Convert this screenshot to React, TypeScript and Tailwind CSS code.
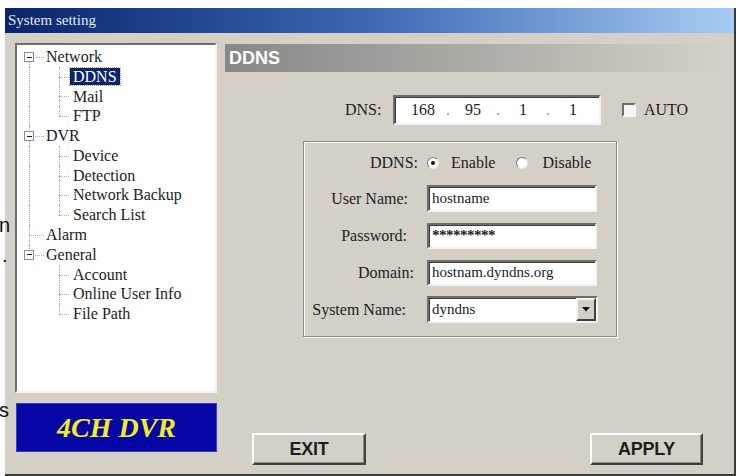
import React from "react";

const serif = "font-['Liberation_Serif','Times_New_Roman',serif]";
const sans = "font-['Liberation_Sans',Arial,sans-serif]";

type Row = {
  label: string;
  kind: "box" | "leaf" | "child";
  v1: "none" | "full" | "top" | "bottom";
  v2?: "full" | "top";
  selected?: boolean;
};

const rows: Row[] = [
  { label: "Network", kind: "box", v1: "bottom" },
  { label: "DDNS", kind: "child", v1: "full", v2: "full", selected: true },
  { label: "Mail", kind: "child", v1: "full", v2: "full" },
  { label: "FTP", kind: "child", v1: "full", v2: "top" },
  { label: "DVR", kind: "box", v1: "full" },
  { label: "Device", kind: "child", v1: "full", v2: "full" },
  { label: "Detection", kind: "child", v1: "full", v2: "full" },
  { label: "Network Backup", kind: "child", v1: "full", v2: "full" },
  { label: "Search List", kind: "child", v1: "full", v2: "top" },
  { label: "Alarm", kind: "leaf", v1: "full" },
  { label: "General", kind: "box", v1: "top" },
  { label: "Account", kind: "child", v1: "none", v2: "full" },
  { label: "Online User Info", kind: "child", v1: "none", v2: "full" },
  { label: "File Path", kind: "child", v1: "none", v2: "top" },
];

function TreeRow({ r }: { r: Row }) {
  return (
    <div className="relative h-[19.8px] flex items-center">
      {r.v1 === "full" && (
        <span className="absolute left-[12px] top-0 h-full border-l border-dotted border-[#a8a8a8]" />
      )}
      {r.v1 === "top" && (
        <span className="absolute left-[12px] top-0 h-1/2 border-l border-dotted border-[#a8a8a8]" />
      )}
      {r.v1 === "bottom" && (
        <span className="absolute left-[12px] top-1/2 h-1/2 border-l border-dotted border-[#a8a8a8]" />
      )}
      {r.kind === "box" && (
        <>
          <span className="absolute left-[16px] top-1/2 w-[11px] border-t border-dotted border-[#a8a8a8]" />
          <span className="absolute left-[7px] top-[5px] w-[10px] h-[10px] border border-[#8c8c8c] bg-white flex items-center justify-center">
            <span className="w-[5px] h-px bg-[#202020]" />
          </span>
        </>
      )}
      {r.kind === "leaf" && (
        <span className="absolute left-[12px] top-1/2 w-[15px] border-t border-dotted border-[#a8a8a8]" />
      )}
      {r.kind === "child" && (
        <>
          {r.v2 === "full" ? (
            <span className="absolute left-[42px] top-0 h-full border-l border-dotted border-[#a8a8a8]" />
          ) : (
            <span className="absolute left-[42px] top-0 h-1/2 border-l border-dotted border-[#a8a8a8]" />
          )}
          <span className="absolute left-[42px] top-1/2 w-[10px] border-t border-dotted border-[#a8a8a8]" />
        </>
      )}
      <div className={r.kind === "child" ? "pl-[53px]" : "pl-[29px]"}>
        {r.kind === "child" ? (
          <span
            className={
              r.selected
                ? "inline-block px-[3px] leading-[17px] bg-[#0a246a] text-white outline-1 outline-dotted outline-[#c0a060]"
                : "inline-block px-[3px] leading-[17px] text-[#1c1c1c]"
            }
          >
            {r.label}
          </span>
        ) : (
          <span className="inline-block leading-[17px] text-[#1c1c1c]">{r.label}</span>
        )}
      </div>
    </div>
  );
}

function Sunken({ className, children }: { className: string; children?: React.ReactNode }) {
  return (
    <div
      className={
        "bg-white border-2 border-t-[#6e6e6e] border-l-[#6e6e6e] border-b-[#f4f4f4] border-r-[#f4f4f4] shadow-[inset_1px_1px_0_#3c3c3c] " +
        className
      }
    >
      {children}
    </div>
  );
}

function Radio({ checked }: { checked?: boolean }) {
  return (
    <span className="w-[12px] h-[12px] rounded-full bg-white border border-t-[#7a7a7a] border-l-[#7a7a7a] border-b-[#e8e8e8] border-r-[#e8e8e8] flex items-center justify-center">
      {checked && <span className="w-[4px] h-[4px] rounded-full bg-[#111]" />}
    </span>
  );
}

function Btn({ label, className }: { label: string; className: string }) {
  return (
    <div
      className={
        "h-[32px] bg-[#d4d0c8] border-2 border-t-white border-l-white border-b-[#404040] border-r-[#404040] shadow-[inset_-1px_-1px_0_#8a8a8a] flex items-center justify-center text-[18px] font-bold text-[#1e1e1e] tracking-[-0.3px] " +
        sans +
        " " +
        className
      }
    >
      {label}
    </div>
  );
}

export default function App() {
  return (
    <div className={"relative w-[740px] h-[476px] bg-white overflow-hidden pl-[5px] pr-[4px] pt-[8px] flex " + serif}>
      <div className="flex-1 flex flex-col border-r-2 border-b-2 border-[#3a3a3a] bg-[#d4d0c8]">
        {/* title bar */}
        <div className="h-[25px] bg-linear-to-r from-[#0a246a] via-[#3c68b4] to-[#a8ccf2] flex items-center pl-[3px] text-[15px] text-[#e4e8f4]">
          System setting
        </div>
        <div className="flex-1 flex">
          {/* left column */}
          <div className="w-[212px] pl-[10px] pt-[10px] flex flex-col">
            <div className="w-[202px] h-[350px] bg-white border-2 border-t-[#6e6e6e] border-l-[#6e6e6e] border-b-[#f4f4f4] border-r-[#f4f4f4] pt-[2px] text-[16px]">
              {rows.map((r) => (
                <TreeRow key={r.label} r={r} />
              ))}
            </div>
            <div className="mt-[10px] ml-[1px] w-[201px] h-[49px] bg-[#0606a6] border border-[#3a3ad0] flex items-center justify-center">
              <span className="text-[28px] font-bold italic text-[#f2ee22] leading-none">4CH DVR</span>
            </div>
          </div>
          {/* right column */}
          <div className="flex-1 flex flex-col pl-[8px] pt-[11px] pb-[9px]">
            <div className={"w-[495px] h-[28px] bg-linear-to-r from-[#878787] to-[#d4d0c8] flex items-center pl-[4px] text-[18px] font-bold text-white " + sans}>
              DDNS
            </div>
            {/* DNS row */}
            <div className="mt-[23px] ml-[120px] h-[30px] flex items-center text-[16px] text-[#1c1c1c]">
              <span className="w-[36px] mr-[12px]">DNS:</span>
              <Sunken className="w-[208px] h-[30px] flex items-center pl-[9px]">
                <span className="w-[38px] text-center">168</span>
                <span className="w-[12px] text-center text-[#9a9a9a]">.</span>
                <span className="w-[38px] text-center">95</span>
                <span className="w-[12px] text-center text-[#9a9a9a]">.</span>
                <span className="w-[38px] text-center">1</span>
                <span className="w-[12px] text-center text-[#9a9a9a]">.</span>
                <span className="w-[38px] text-center">1</span>
              </Sunken>
              <span className="ml-[21px] w-[14px] h-[14px] bg-[#f4f4f4] border-2 border-t-[#6e6e6e] border-l-[#6e6e6e] border-b-[#f8f8f8] border-r-[#f8f8f8]" />
              <span className="ml-[8px]">AUTO</span>
            </div>
            {/* group box */}
            <div className="mt-[16px] ml-[78px] w-[314px] h-[196px] border border-[#8a8a8a] shadow-[inset_1px_1px_0_#ffffff,1px_1px_0_#ffffff] pt-[9px] flex flex-col gap-[10px] text-[16px] text-[#1c1c1c]">
              <div className="h-[24px] flex items-center">
                <span className="w-[123px] pr-[9px] text-right">DDNS:</span>
                <Radio checked />
                <span className="ml-[12px]">Enable</span>
                <span className="ml-[21px]">
                  <Radio />
                </span>
                <span className="ml-[14px]">Disable</span>
              </div>
              <div className="h-[27px] flex items-center">
                <span className="w-[123px] pr-[19px] text-right">User Name:</span>
                <Sunken className="w-[170px] h-[27px] flex items-center pl-[3px] text-[15px]">hostname</Sunken>
              </div>
              <div className="h-[27px] flex items-center">
                <span className="w-[123px] pr-[20px] text-right">Password:</span>
                <Sunken className="w-[170px] h-[26px] flex items-center pl-[3px] text-[15px] font-bold tracking-[-0.5px]">
                  *********
                </Sunken>
              </div>
              <div className="h-[27px] flex items-center">
                <span className="w-[123px] pr-[13px] text-right">Domain:</span>
                <Sunken className="w-[170px] h-[26px] flex items-center pl-[3px] text-[15px]">hostnam.dyndns.org</Sunken>
              </div>
              <div className="h-[27px] flex items-center">
                <span className="w-[123px] pr-[21px] text-right">System Name:</span>
                <Sunken className="w-[171px] h-[27px] flex items-center pl-[3px] text-[15px]">
                  <span className="flex-1">dyndns</span>
                  <span className="w-[20px] h-full bg-[#d4d0c8] border-2 border-t-[#f4f4f4] border-l-[#f4f4f4] border-b-[#404040] border-r-[#404040] flex items-center justify-center">
                    <svg width="8" height="5" viewBox="0 0 8 5">
                      <path d="M0 0 L8 0 L4 4.5 Z" fill="#111" />
                    </svg>
                  </span>
                </Sunken>
              </div>
            </div>
            {/* buttons */}
            <div className="mt-auto flex justify-between">
              <Btn label="EXIT" className="ml-[27px] w-[114px]" />
              <Btn label="APPLY" className="mr-[31px] w-[113px]" />
            </div>
          </div>
        </div>
      </div>
      {/* fragments of the page behind the window */}
      <span className={"absolute left-[-1px] top-[215px] text-[20px] leading-none text-[#111] " + sans}>n</span>
      <span className={"absolute left-[2px] top-[245px] text-[20px] leading-none text-[#111] " + sans}>.</span>
      <span className={"absolute left-[-1px] top-[400px] text-[20px] leading-none text-[#111] " + sans}>s</span>
    </div>
  );
}
